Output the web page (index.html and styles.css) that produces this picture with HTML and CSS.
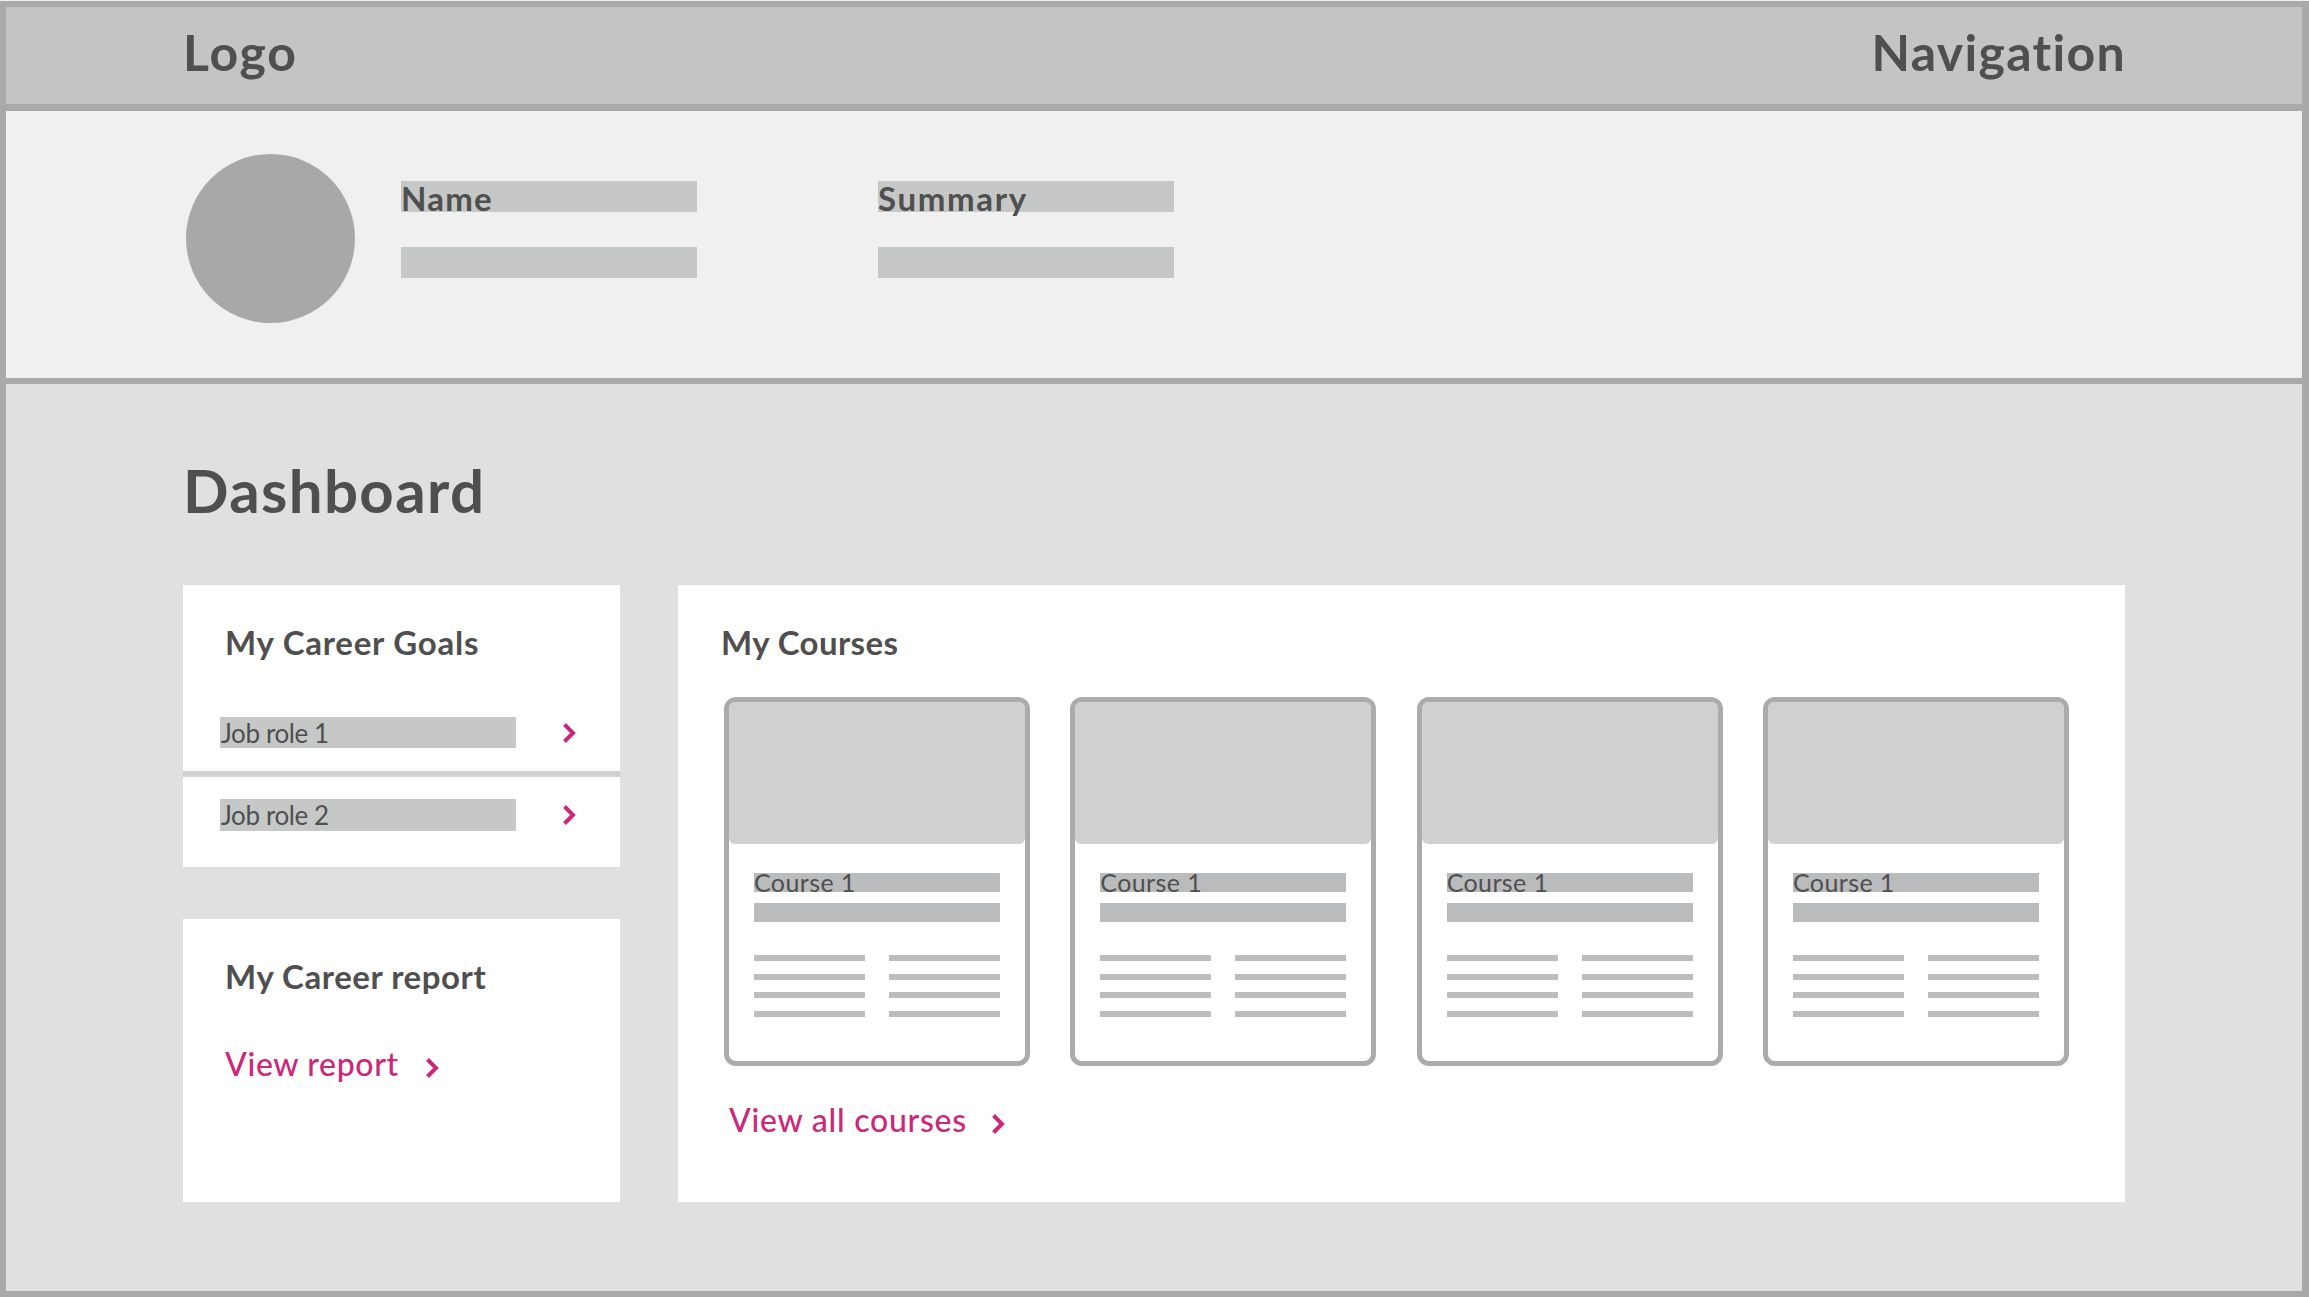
FILE: index.html
```html
<!DOCTYPE html>
<html lang="en">
<head>
<meta charset="utf-8">
<title>Dashboard wireframe</title>
<link rel="stylesheet" href="styles.css">
</head>
<body>
<div class="page">
  <header class="topbar">
    <div class="logo">Logo</div>
    <nav class="nav">Navigation</nav>
  </header>
  <section class="profile">
    <div class="avatar"></div>
    <div class="profile-col">
      <div class="pbar"><span class="pname">Name</span></div>
      <div class="pbar"></div>
    </div>
    <div class="profile-col">
      <div class="pbar"><span class="psummary">Summary</span></div>
      <div class="pbar"></div>
    </div>
  </section>
  <main class="main">
    <h1 class="title">Dashboard</h1>
    <div class="layout">
      <div class="side">
        <section class="card goals">
          <h2 class="h-goals">My Career Goals</h2>
          <div class="role role-first">
            <div class="role-bar">Job role 1</div>
            <svg class="chev" viewBox="0 0 12 20"><path d="M1.5 1.5 10 10 1.5 18.5"/></svg>
          </div>
          <div class="role role-second">
            <div class="role-bar">Job role 2</div>
            <svg class="chev" viewBox="0 0 12 20"><path d="M1.5 1.5 10 10 1.5 18.5"/></svg>
          </div>
        </section>
        <section class="card report">
          <h2 class="h-report">My Career report</h2>
          <a class="link link-report"><span>View report</span><svg class="chev" viewBox="0 0 12 20"><path d="M1.5 1.5 10 10 1.5 18.5"/></svg></a>
        </section>
      </div>
      <section class="card courses">
        <h2 class="h-courses">My Courses</h2>
        <div class="course-grid">
          <article class="course">
            <div class="thumb"></div>
            <div class="cbody">
              <div class="cbar">Course 1</div>
              <div class="cbar"></div>
              <div class="lines"><i></i><i></i><i></i><i></i><i></i><i></i><i></i><i></i></div>
            </div>
          </article>
          <article class="course">
            <div class="thumb"></div>
            <div class="cbody">
              <div class="cbar">Course 1</div>
              <div class="cbar"></div>
              <div class="lines"><i></i><i></i><i></i><i></i><i></i><i></i><i></i><i></i></div>
            </div>
          </article>
          <article class="course">
            <div class="thumb"></div>
            <div class="cbody">
              <div class="cbar">Course 1</div>
              <div class="cbar"></div>
              <div class="lines"><i></i><i></i><i></i><i></i><i></i><i></i><i></i><i></i></div>
            </div>
          </article>
          <article class="course">
            <div class="thumb"></div>
            <div class="cbody">
              <div class="cbar">Course 1</div>
              <div class="cbar"></div>
              <div class="lines"><i></i><i></i><i></i><i></i><i></i><i></i><i></i><i></i></div>
            </div>
          </article>
        </div>
        <a class="link link-all"><span>View all courses</span><svg class="chev" viewBox="0 0 12 20"><path d="M1.5 1.5 10 10 1.5 18.5"/></svg></a>
      </section>
    </div>
  </main>
</div>
</body>
</html>
```
FILE: styles.css
```css
* { box-sizing: border-box; }
html, body { margin: 0; padding: 0; }
body {
  background: #f0f0f0;
  font-family: "Lato", "Noto Sans", sans-serif;
  color: #4f4f4f;
  width: 2309px;
  height: 1297px;
  overflow: hidden;
}
.page {
  margin-top: 1px;
  height: 1296px;
  border: solid #a9a9a9;
  border-width: 6px 7px 6px 6px;
  display: flex;
  flex-direction: column;
}
.topbar {
  height: 104px;
  flex: none;
  background: #c4c4c4;
  border-bottom: 7px solid #a9a9a9;
  padding: 0 176px 7px 177px;
  display: flex;
  justify-content: space-between;
  align-items: center;
  font-size: 50px;
  font-weight: 700;
  line-height: 60px;
}
.logo { letter-spacing: 1.7px; }
.nav { letter-spacing: 1.3px; }
.profile {
  height: 273px;
  flex: none;
  background: #f0f0f0;
  border-bottom: 6px solid #a9a9a9;
  padding: 43px 0 0 180px;
  display: flex;
}
.avatar {
  width: 169px;
  height: 169px;
  border-radius: 50%;
  background: #a8a8a8;
  margin-right: 46px;
}
.profile-col {
  width: 296px;
  margin-right: 181px;
  padding-top: 27px;
  display: flex;
  flex-direction: column;
  gap: 35px;
}
.pbar {
  height: 31px;
  background: #c6c8c7;
  font-size: 33px;
  font-weight: 700;
  line-height: 35px;
}
.pname { letter-spacing: 1.2px; }
.psummary { letter-spacing: 1.65px; }
.main {
  flex: 1;
  background: #e0e0e0;
  padding: 0 177px;
}
.title {
  margin: 0;
  font-size: 60px;
  font-weight: 700;
  line-height: 72px;
  padding-top: 70px;
  height: 201px;
  letter-spacing: 1.35px;
}
.layout {
  display: grid;
  grid-template-columns: 437px 1447px;
  gap: 58px;
}
.side {
  display: flex;
  flex-direction: column;
  gap: 52px;
}
.card { background: #fff; }
h2 {
  margin: 0;
  font-size: 33px;
  font-weight: 700;
  line-height: 40px;
}
.goals { height: 282px; padding-top: 37px; }
.h-goals { margin-left: 42px; margin-bottom: 55px; letter-spacing: .75px; }
.h-report { letter-spacing: .55px; margin-left: -1px; }
.h-courses { letter-spacing: .4px; margin-left: -1px; }
.role {
  display: flex;
  align-items: center;
  padding-left: 37px;
}
.role-first { padding-bottom: 23px; border-bottom: 6px solid #d0d0d0; }
.role-second { padding-top: 22px; }
.role-second .role-bar { height: 32px; }
.role-bar {
  width: 296px;
  height: 31px;
  background: #c6c8c7;
  font-size: 26px;
  line-height: 32px;
  letter-spacing: -.4px;
  padding-left: 1px;
  margin-right: 47px;
}
.chev {
  width: 12px;
  height: 20px;
  flex: none;
  fill: none;
  stroke: #cc2778;
  stroke-width: 4;
  overflow: visible;
}
.report { height: 283px; padding: 37px 0 0 43px; }
.link {
  display: inline-flex;
  align-items: center;
  font-size: 32px;
  font-weight: 500;
  line-height: 40px;
  color: #cc2778;
}
.link span { margin-right: 27px; }
.link-report { margin-top: 48px; margin-left: -1px; }
.link-report span { letter-spacing: .65px; }
.link-report .chev { margin-top: 8px; }
.courses { height: 617px; padding: 37px 0 0 44px; }
.h-courses { margin-bottom: 35px; }
.course-grid {
  width: 1345px;
  margin-left: 2px;
  display: grid;
  grid-template-columns: repeat(4, 306px);
  justify-content: space-between;
}
.course {
  height: 369px;
  border: 5px solid #ababab;
  border-radius: 12px;
  background: #fff;
}
.thumb {
  height: 142px;
  background: #d0d0d0;
  border-radius: 6px;
}
.cbody { padding: 29px 25px 0; }
.cbar {
  height: 19px;
  background: #babbbc;
  font-size: 25px;
  line-height: 19px;
  letter-spacing: .4px;
  margin-bottom: 11px;
}
.lines {
  margin-top: 33px;
  display: grid;
  grid-template-columns: 111px 111px;
  justify-content: space-between;
  row-gap: 12.5px;
}
.lines i {
  display: block;
  height: 6px;
  background: #bcbdbe;
}
.link-all { margin: 34px 0 0 7px; }
.link-all span { letter-spacing: .75px; margin-right: 25px; }
.link-all .chev { margin-top: 8px; }
```
